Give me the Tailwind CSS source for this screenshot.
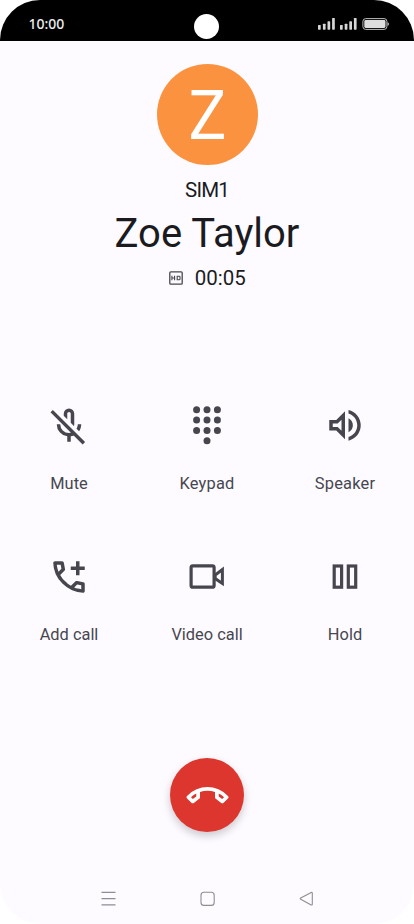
<!DOCTYPE html>
<html lang="en">
<head>
    <meta charset="UTF-8">
    <meta name="viewport" content="width=device-width, initial-scale=1.0">
    <title>Ongoing Call</title>
    <script src="https://cdn.jsdelivr.net/npm/@tailwindcss/browser@4"></script>
</head>
<body class="bg-white font-['Roboto',sans-serif]">

    <div class="w-[414px] h-[924px] bg-[#fdfbff] rounded-[40px] overflow-hidden flex flex-col">

        <!-- Status bar -->
        <header class="relative h-[41px] shrink-0 bg-black flex items-center justify-between pl-[28.5px] pr-[25px] pt-[7px]">
            <span class="font-['Noto_Sans',sans-serif] font-medium text-[14px] leading-5 text-[#ececec]">10:00</span>
            <div class="absolute left-[194px] top-[14px] size-[25px] rounded-full bg-white"></div>
            <svg class="w-[71px] h-[12px]" viewBox="0 0 71 12" fill="#d6d6d6">
                <rect x="0" y="7" width="2.7" height="4.7" rx=".6"/>
                <rect x="4.9" y="5.7" width="2.7" height="6" rx=".6"/>
                <rect x="9.5" y="3.3" width="2.7" height="8.4" rx=".6"/>
                <rect x="14.1" y="0" width="2.7" height="11.7" rx=".6"/>
                <rect x="22" y="7" width="2.7" height="4.7" rx=".6"/>
                <rect x="26.7" y="5.7" width="2.7" height="6" rx=".6"/>
                <rect x="31.3" y="3.3" width="2.7" height="8.4" rx=".6"/>
                <rect x="35.9" y="0" width="2.7" height="11.7" rx=".6"/>
                <rect x="44.9" y=".6" width="24" height="10.8" rx="2.8" fill="none" stroke="#bdbdbd" stroke-width="1"/>
                <rect x="46.3" y="2" width="21.2" height="8" rx="1.4" fill="#dedede"/>
                <path d="M69.6 4.2q1.3.4 1.3 1.8t-1.3 1.8z"/>
            </svg>
        </header>

        <!-- Caller -->
        <section class="flex flex-col items-center pt-[23px] text-[#1b1b1f]">
            <div class="size-[101px] rounded-full bg-[#fb923f] flex items-center justify-center pt-[2px] text-white text-[68px] leading-none">
                <span class="scale-x-[0.93]">Z</span>
            </div>
            <p class="mt-[11px] text-[20.5px] leading-7 tracking-[-0.8px]">SIM1</p>
            <h1 class="mt-[5px] text-[40px] leading-[50px]">Zoe Taylor</h1>
            <div class="mt-[5px] ml-[1px] flex items-center gap-[11.5px]">
                <svg class="w-[14px] h-[14px]" viewBox="0 0 14 14" fill="none" stroke="#47464f">
                    <rect x=".8" y=".8" width="12.4" height="12.4" rx="1" stroke-width="1.3"/>
                    <path d="M2.9 4.8v4.4M5.6 4.8v4.4M2.9 7h2.7M8.2 5.3h2q.8 0 .8.8v1.8q0 .8-.8.8h-2z" stroke-width="1.1"/>
                </svg>
                <span class="text-[20.5px] leading-7">00:05</span>
            </div>
        </section>

        <!-- Call controls -->
        <main class="mt-[113px] grid grid-cols-3 gap-y-[60px] text-center text-[16.4px] leading-6 text-[#47464f]">
            <div class="flex flex-col items-center gap-[25px]">
                <svg class="size-[42px]" viewBox="0 -960 960 960" fill="currentColor">
                    <path d="m710-362-58-58q14-23 21-48t7-52h80q0 44-13 83.5T710-362ZM480-594Zm112 112-72-72v-206q0-17-11.5-28.5T480-800q-17 0-28.5 11.5T440-760v126l-80-80v-46q0-50 35-85t85-35q50 0 85 35t35 85v240q0 11-2.5 20t-5.5 18ZM440-120v-123q-104-14-172-93t-68-184h80q0 83 57.5 141.5T480-320q34 0 64.5-10.5T600-360l57 57q-29 23-63.5 39T520-243v123h-80Zm352 64L56-792l56-56 736 736-56 56Z"/>
                </svg>
                <span>Mute</span>
            </div>
            <div class="flex flex-col items-center gap-[25px]">
                <svg class="size-[42px]" viewBox="0 0 42 42" fill="currentColor">
                    <circle cx="10.6" cy="4.7" r="3.5"/><circle cx="21" cy="4.7" r="3.5"/><circle cx="31.4" cy="4.7" r="3.5"/>
                    <circle cx="10.6" cy="15" r="3.5"/><circle cx="21" cy="15" r="3.5"/><circle cx="31.4" cy="15" r="3.5"/>
                    <circle cx="10.6" cy="25.4" r="3.5"/><circle cx="21" cy="25.4" r="3.5"/><circle cx="31.4" cy="25.4" r="3.5"/>
                    <circle cx="21" cy="35.8" r="3.5"/>
                </svg>
                <span class="tracking-[0.2px]">Keypad</span>
            </div>
            <div class="flex flex-col items-center gap-[25px]">
                <svg class="size-[42px]" viewBox="0 .4 24 24" fill="currentColor">
                    <path d="M3 9v6h4l5 5V4L7 9H3zm7-.17v6.34L7.83 13H5v-2h2.83L10 8.83zM16.5 12c0-1.77-1.02-3.29-2.5-4.03v8.05c1.48-.73 2.5-2.25 2.5-4.02zM14 3.23v2.06c2.89.86 5 3.54 5 6.71s-2.11 5.85-5 6.71v2.06c4.01-.91 7-4.49 7-8.77s-2.99-7.86-7-8.77z"/>
                </svg>
                <span class="tracking-[0.2px]">Speaker</span>
            </div>
            <div class="flex flex-col items-center gap-[25px]">
                <svg class="size-[42px]" viewBox="0 -960 960 960" fill="currentColor">
                    <path d="M798-120q-125 0-247-54.5T329-329Q229-429 174.5-551T120-798q0-18 12-30t30-12h162q14 0 25 9.5t13 22.5l26 140q2 16-1 27t-11 19l-97 98q20 37 47.5 71.5T387-386q31 31 65 57.5t72 48.5l94-94q9-9 23.5-13.5T670-390l138 28q14 4 23 14.5t9 23.5v162q0 18-12 30t-30 12ZM241-600l66-66-17-94h-89q5 41 14 81t26 79Zm358 358q39 17 79.5 27t81.5 13v-88l-94-19-67 67Z"/>
                    <path d="M640-520v-120H520v-80h120v-120h80v120h120v80H720v120h-80Z"/>
                </svg>
                <span>Add call</span>
            </div>
            <div class="flex flex-col items-center gap-[25px]">
                <svg class="size-[42px]" viewBox="0 0 42 42" fill="none" stroke="currentColor" stroke-width="3.2">
                    <rect x="5.1" y="9.8" width="23" height="21.4" rx="1.8"/>
                    <path d="M29.2 19 36.4 13.6v13.8L29.2 22.6z" stroke-width="3"/>
                </svg>
                <span>Video call</span>
            </div>
            <div class="flex flex-col items-center gap-[25px]">
                <svg class="size-[42px]" viewBox="0 0 42 42" fill="none" stroke="currentColor" stroke-width="3.2">
                    <rect x="10.2" y="10" width="7.4" height="21.2"/>
                    <rect x="24.3" y="10" width="7.4" height="21.2"/>
                </svg>
                <span>Hold</span>
            </div>
        </main>

        <!-- End call -->
        <div class="mt-[111px] flex justify-center">
            <button class="size-[74px] rounded-full bg-[#dc362e] text-white flex items-center justify-center pb-[2px] shadow-[0_4px_8px_rgba(0,0,0,0.2)]" aria-label="End call">
                <svg class="size-[45px]" viewBox="0 -960 960 960" fill="currentColor">
                    <path d="m136-304-92-90q-12-12-12-28t12-28q88-95 203-142.5T480-640q118 0 232.5 47.5T916-450q12 12 12 28t-12 28l-92 90q-11 11-25.5 12t-26.5-8l-116-88q-8-6-12-14t-4-18v-114q-38-12-78-19t-82-7q-42 0-82 7t-78 19v114q0 10-4 18t-12 14l-116 88q-12 9-26.5 8T136-304Zm104-198q-29 15-56 34.5T128-424l40 40 72-56v-62Zm480 2v60l72 56 40-38q-29-26-56-45t-56-33Z"/>
                </svg>
            </button>
        </div>

        <!-- System navigation -->
        <nav class="mt-auto mb-[17px] flex justify-center gap-[82px] text-[#8e8d92]">
            <svg class="size-[17px]" viewBox="0 0 17 17" fill="none" stroke="currentColor" stroke-width="1.1">
                <path d="M1.5 2.4h14M1.5 8.6h14M1.5 14.9h14"/>
            </svg>
            <svg class="size-[17px]" viewBox="0 0 17 17" fill="none" stroke="currentColor" stroke-width="1.1">
                <rect x="2" y="2.2" width="13.2" height="13.2" rx="3"/>
            </svg>
            <svg class="size-[17px]" viewBox="0 0 17 17" fill="none" stroke="currentColor" stroke-width="1.1" stroke-linejoin="round">
                <path d="M2.7 8 13.2 2.5q1.1-.5 1.1.8v10.8q0 1.3-1.1.8L2.7 9.3q-1-.6 0-1.3z"/>
            </svg>
        </nav>
    </div>

</body>
</html>
